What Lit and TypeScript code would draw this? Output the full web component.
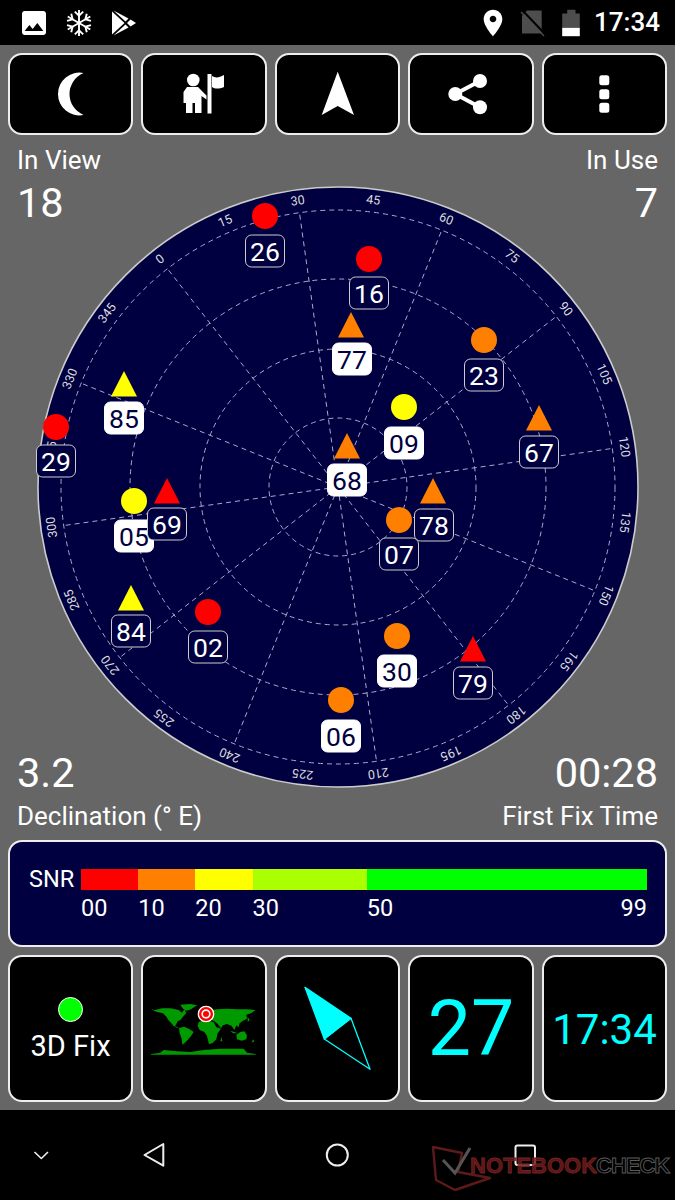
import { LitElement, html, css, svg } from "lit";
import { customElement } from "lit/decorators.js";

type Sat = { id: string; shape: "c" | "t"; color: string; x: number; y: number; lx: number; ly: number; used: boolean };

const R = "#ff0000", O = "#ff8000", Y = "#ffff00";
const SATS: Sat[] = [
  { id: "26", shape: "c", color: R, x: 265, y: 216, lx: 265, ly: 251, used: false },
  { id: "16", shape: "c", color: R, x: 369, y: 259, lx: 369, ly: 293, used: false },
  { id: "77", shape: "t", color: O, x: 351, y: 325, lx: 352, ly: 359, used: true },
  { id: "23", shape: "c", color: O, x: 484, y: 340, lx: 484, ly: 375, used: false },
  { id: "09", shape: "c", color: Y, x: 404, y: 407, lx: 404, ly: 443, used: true },
  { id: "67", shape: "t", color: O, x: 539, y: 418, lx: 539, ly: 452, used: false },
  { id: "85", shape: "t", color: Y, x: 124, y: 384, lx: 124, ly: 418, used: true },
  { id: "29", shape: "c", color: R, x: 56, y: 427, lx: 56, ly: 461, used: false },
  { id: "68", shape: "t", color: O, x: 347, y: 446, lx: 347, ly: 480, used: true },
  { id: "07", shape: "c", color: O, x: 399, y: 520, lx: 399, ly: 554, used: false },
  { id: "78", shape: "t", color: O, x: 433, y: 491, lx: 434, ly: 525, used: false },
  { id: "05", shape: "c", color: Y, x: 134, y: 501, lx: 134, ly: 536, used: true },
  { id: "69", shape: "t", color: R, x: 167, y: 491, lx: 167, ly: 524, used: false },
  { id: "84", shape: "t", color: Y, x: 131, y: 598, lx: 131, ly: 631, used: false },
  { id: "02", shape: "c", color: R, x: 208, y: 612, lx: 208, ly: 647, used: false },
  { id: "30", shape: "c", color: O, x: 397, y: 636, lx: 397, ly: 671, used: true },
  { id: "79", shape: "t", color: R, x: 473, y: 649, lx: 473, ly: 683, used: false },
  { id: "06", shape: "c", color: O, x: 341, y: 700, lx: 341, ly: 736, used: true },
];

const CX = 338, CY = 487, ROT = -38;
const pt = (deg: number, r: number) => {
  const a = ((deg + ROT) * Math.PI) / 180;
  return [CX + r * Math.sin(a), CY - r * Math.cos(a)];
};

const BANDS = [
  { w: 10, c: "#ff0000" },
  { w: 10, c: "#ff8000" },
  { w: 10, c: "#ffff00" },
  { w: 20, c: "#aaff00" },
  { w: 49, c: "#00ff00" },
];
const TICKS = [
  { w: 10, t: ["00"] },
  { w: 10, t: ["10"] },
  { w: 10, t: ["20"] },
  { w: 20, t: ["30"] },
  { w: 49, t: ["50", "99"] },
];

const LAND = [
  "25,30 45,25 70,25 85,28 95,30 105,38 112,28 118,38 108,50 100,60 92,64 88,72 84,78 92,82 98,86 92,84 80,78 72,68 64,60 58,50 48,40 30,36 12,28",
  "100,14 130,12 150,16 132,28 118,32 108,26",
  "96,84 112,80 128,88 140,96 132,108 122,120 112,130 106,134 104,116 98,100",
  "155,66 172,60 190,64 200,66 208,82 222,86 212,100 208,118 196,130 186,132 180,108 172,96 158,90 152,78",
  "160,58 170,40 190,30 210,28 240,26 270,28 300,28 326,30 312,40 298,44 300,56 288,62 278,70 274,82 268,76 262,90 254,78 240,72 228,76 222,84 212,72 200,62 180,56",
  "268,104 280,96 292,94 300,106 298,118 284,122 270,118",
  "250,92 262,96 272,100 258,100",
  "302,50 308,60 302,66",
  "224,110 226,124 220,124",
  "318,118 322,124 314,128",
  "12,162 40,158 50,150 90,154 130,156 170,150 220,146 290,146 300,158 326,162 326,164 12,164",
];

@customElement("app-root")
export class AppRoot extends LitElement {
  static styles = css`
    :host {
      display: block;
      width: 675px;
      height: 1200px;
      font-family: Roboto, "Liberation Sans", sans-serif;
      color: #fff;
      overflow: hidden;
    }
    .page { display: flex; flex-direction: column; height: 1200px; }
    .status {
      height: 45px; background: #000; display: flex; align-items: center;
      justify-content: space-between; padding: 0 15px 0 18px; box-sizing: border-box;
    }
    .group { display: flex; align-items: center; gap: 13px; }
    .group.right { gap: 7px; }
    .icon32 { width: 32px; height: 32px; display: block; }
    .clock { font-size: 26px; font-weight: 500; line-height: 45px; }
    .main {
      flex: 1; background: #666; display: flex; flex-direction: column;
      padding: 8px 8px 8px; box-sizing: border-box;
    }
    .row { display: flex; gap: 8.4px; }
    .tile {
      flex: 1 1 0; min-width: 0; background: #000; border: 2px solid #eee; border-radius: 14px;
      box-sizing: border-box; display: flex; align-items: center; justify-content: center;
      flex-direction: column; overflow: hidden;
    }
    .tools .tile { height: 82px; }
    .tools svg { width: 60px; height: 60px; display: block; }
    .stage { display: grid; height: 697px; margin: 0 -8px; }
    .stage > * { grid-area: 1 / 1; }
    .plot { width: 604px; height: 604px; margin: 50px 0 0 36px; display: block; }
    .plot text { font-family: Roboto, "Liberation Sans", sans-serif; }
    .deg { font-size: 12.5px; fill: #ddd; text-anchor: middle; }
    .satnum { font-size: 26.5px; text-anchor: middle; }
    .stats { display: flex; justify-content: space-between; padding: 0 17px; }
    .stats.top { align-self: start; padding-top: 9px; }
    .stats.bottom { align-self: end; }
    .stat { display: flex; flex-direction: column; }
    .stat.r { align-items: flex-end; }
    .cap { font-size: 26px; line-height: 32px; }
    .num { font-size: 41.5px; line-height: 52px; }
    .top .num { margin-top: 1px; }
    .bottom .num { margin-bottom: 1px; }
    .snr {
      height: 107px; margin-top: 8px; background: #000040; border: 2px solid #eee;
      border-radius: 14px; box-sizing: border-box; padding: 27px 18px 0 19px;
      display: grid; grid-template-columns: 52px 566px; grid-template-rows: 21px auto;
      font-size: 23.5px;
    }
    .snr-label { line-height: 21px; }
    .bar { display: flex; height: 21px; }
    .ticks { grid-column: 2; display: flex; margin-top: 6px; line-height: 24px; }
    .tick { display: flex; justify-content: space-between; }
    .tiles { margin-top: 8px; }
    .tiles .tile { height: 147px; }
    .dot {
      width: 25px; height: 25px; border-radius: 50%; background: #00ff00;
      border: 1.5px solid #fff; box-sizing: border-box; margin-top: 2px;
    }
    .fix { font-size: 29px; line-height: 34px; margin-top: 7px; }
    .map { width: 114px; height: 60px; display: block; margin-top: 3px; flex: none; }
    .compass { width: 125px; height: 147px; display: block; flex: none; }
    .big { color: #00ffff; font-size: 77px; line-height: 90px; }
    .mid { color: #00ffff; font-size: 42px; line-height: 50px; margin-top: 2px; }
    .nav { height: 90px; background: #000; }
    .nav svg { display: block; width: 675px; height: 90px; }
    .nav text { font-family: "Liberation Sans", sans-serif; font-weight: 700; font-size: 22px; }
    .wm-check { letter-spacing: -1px; }
  `;

  private polar() {
    const rings = [69, 138, 208, 277];
    const labels = [];
    for (let d = 0; d < 360; d += 15) {
      const [x, y] = pt(d, 285);
      labels.push(svg`<text class="deg" transform="translate(${x} ${y}) rotate(${d + ROT})">${d}</text>`);
    }
    const spokes = [];
    for (let d = 0; d < 360; d += 30) {
      const [x, y] = pt(d, 277);
      spokes.push(svg`<line x1=${CX} y1=${CY} x2=${x} y2=${y} stroke="#aaaacc" stroke-width="1" stroke-dasharray="5 4"/>`);
    }
    return html`<svg class="plot" viewBox="36 185 604 604">
      <circle cx=${CX} cy=${CY} r="300" fill="#000040" stroke="#ccc" stroke-width="1.6"/>
      ${rings.map((r) => svg`<circle cx=${CX} cy=${CY} r=${r} fill="none" stroke="#aaaacc" stroke-width="1" stroke-dasharray="5 4"/>`)}
      ${spokes}
      ${labels}
      ${SATS.map((s) => svg`
        ${s.shape === "c"
          ? svg`<circle cx=${s.x} cy=${s.y} r="13" fill=${s.color}/>`
          : svg`<polygon points="${s.x},${s.y - 13} ${s.x + 13},${s.y + 12.5} ${s.x - 13},${s.y + 12.5}" fill=${s.color}/>`}
        <rect x=${s.lx - 19.5} y=${s.ly - 16} width="39" height="32" rx="6"
          fill=${s.used ? "#fff" : "#000040"} stroke=${s.used ? "#fff" : "#ccc"} stroke-width="1"/>
        <text class="satnum" x=${s.lx} y=${s.ly + 9.5} fill=${s.used ? "#000040" : "#fff"}>${s.id}</text>
      `)}
    </svg>`;
  }

  private snowflake() {
    return html`<svg class="icon32" viewBox="0 0 32 32">
      <g fill="none" stroke="#fff" stroke-width="1.9">
        ${[0, 60, 120, 180, 240, 300].map((a) => svg`<g transform="rotate(${a} 16 16)">
          <path d="M16 16V3"/><path d="M11.8 4.6 16 8.6l4.2-4"/>
        </g>`)}
      </g>
    </svg>`;
  }

  render() {
    return html`<div class="page">
      <div class="status">
        <div class="group">
          <svg class="icon32" viewBox="0 0 24 24"><path fill="#fff" d="M21 19V5c0-1.1-.9-2-2-2H5c-1.1 0-2 .9-2 2v14c0 1.1.9 2 2 2h14c1.1 0 2-.9 2-2zM8.5 13.5l2.5 3.01L14.5 12l4.5 6H5l3.5-4.5z"/></svg>
          ${this.snowflake()}
          <svg class="icon32" viewBox="0 0 32 32" fill="#fff">
            <polygon points="4,4.5 16.5,16 4,27.5"/>
            <polygon points="5.5,3.5 20.5,11.5 17.5,14.5"/>
            <polygon points="22.5,12.5 28,16 22.5,19.5 19,16"/>
            <polygon points="5.5,28.5 20.5,20.5 17.5,17.5"/>
          </svg>
        </div>
        <div class="group right">
          <svg class="icon32" viewBox="0 0 24 24"><path fill="#fff" d="M12 2C8.13 2 5 5.13 5 9c0 5.25 7 13 7 13s7-7.75 7-13c0-3.87-3.13-7-7-7zm0 9.5c-1.38 0-2.5-1.12-2.5-2.5s1.12-2.5 2.5-2.5 2.5 1.12 2.5 2.5-1.12 2.5-2.5 2.5z"/></svg>
          <svg class="icon32" viewBox="0 0 32 32">
            <path fill="#4d4d4d" d="M11 3.5H25.7V26.5H6V8.5Z"/>
            <path d="M6 3 29 27" stroke="#000" stroke-width="2"/>
            <path d="M5 5 28 29" stroke="#4d4d4d" stroke-width="1.4"/>
          </svg>
          <svg class="icon32" viewBox="0 0 32 32">
            <path fill="#4d4d4d" d="M12.2 2.8H20.5V6.5H24.8V20.8H7.2V6.5H12.2Z"/>
            <rect x="7.2" y="20.8" width="17.6" height="8.4" fill="#fff"/>
          </svg>
          <div class="clock">17:34</div>
        </div>
      </div>
      <div class="main">
        <div class="row tools">
          <div class="tile"><svg viewBox="40 64 60 60"><path fill="#fff" d="M82.5 73A21.4 21.4 0 1 0 82.5 115A22.75 22.75 0 0 1 82.5 73Z"/></svg></div>
          <div class="tile"><svg viewBox="174 64 60 60" fill="#fff">
            <circle cx="193.3" cy="80" r="6.3"/>
            <path d="M187 87H198L206.5 95.5V99.5L201.5 96V113H195V103H192.5V113H186V103H183.5V92Z"/>
            <rect x="207.5" y="74" width="4" height="39.5"/>
            <path d="M212 76C215 78 219 78 224 75V87C219 89 215 89 212 87Z"/>
          </svg></div>
          <div class="tile"><svg viewBox="308 64 60 60"><path fill="#fff" d="M337.7 71.7 354 115 337.7 106 321.7 115Z"/></svg></div>
          <div class="tile"><svg viewBox="441 64 60 60">
            <path d="M480 81 455.3 94 480 107.3" fill="none" stroke="#fff" stroke-width="4"/>
            <g fill="#fff"><circle cx="480" cy="81" r="7"/><circle cx="455.3" cy="94" r="7"/><circle cx="480" cy="107.3" r="7"/></g>
          </svg></div>
          <div class="tile"><svg viewBox="574 64 60 60" fill="#fff">
            <rect x="599.3" y="75.3" width="10" height="10" rx="2.5"/>
            <rect x="599.3" y="89.3" width="10" height="10" rx="2.5"/>
            <rect x="599.3" y="102.7" width="10" height="10" rx="2.5"/>
          </svg></div>
        </div>
        <div class="stage">
          ${this.polar()}
          <div class="stats top">
            <div class="stat"><div class="cap">In View</div><div class="num">18</div></div>
            <div class="stat r"><div class="cap">In Use</div><div class="num">7</div></div>
          </div>
          <div class="stats bottom">
            <div class="stat"><div class="num">3.2</div><div class="cap">Declination (° E)</div></div>
            <div class="stat r"><div class="num">00:28</div><div class="cap">First Fix Time</div></div>
          </div>
        </div>
        <div class="snr">
          <div class="snr-label">SNR</div>
          <div class="bar">${BANDS.map((b) => html`<div style="flex:${b.w} 0 0;background:${b.c}"></div>`)}</div>
          <div class="ticks">${TICKS.map((t) => html`<div class="tick" style="flex:${t.w} 0 0">${t.t.map((v) => html`<span>${v}</span>`)}</div>`)}</div>
        </div>
        <div class="row tiles">
          <div class="tile"><div class="dot"></div><div class="fix">3D Fix</div></div>
          <div class="tile">
            <svg class="map" viewBox="0 0 342 180">
              <g fill="#009900">${LAND.map((p) => svg`<polygon points=${p}/>`)}</g>
              <circle cx="177" cy="42" r="25" fill="#fff"/>
              <circle cx="177" cy="42" r="21" fill="#ff0000"/>
              <circle cx="177" cy="42" r="14" fill="#fff"/>
              <circle cx="177" cy="42" r="9" fill="#ff0000"/>
            </svg>
          </div>
          <div class="tile">
            <svg class="compass" viewBox="275 955 125 147">
              <polygon points="305,987.3 351,1018.3 324.3,1039" fill="#00ffff" stroke="#00ffff" stroke-width="1.3" stroke-linejoin="round"/>
              <polygon points="351,1018.3 370,1069.3 324.3,1039" fill="none" stroke="#00ffff" stroke-width="1.3" stroke-linejoin="round"/>
            </svg>
          </div>
          <div class="tile"><div class="big">27</div></div>
          <div class="tile"><div class="mid">17:34</div></div>
        </div>
      </div>
      <div class="nav">
        <svg viewBox="0 1110 675 90">
          <g fill="none" stroke="#eee" stroke-width="2" stroke-linejoin="round">
            <path d="M34.5 1152 41.3 1158.5 48 1152" stroke-width="1.6"/>
            <path d="M144.5 1155 163.3 1144V1165.7Z"/>
            <circle cx="337.3" cy="1155" r="10.5"/>
            <rect x="515.5" y="1145.5" width="19.5" height="19.5" rx="2"/>
          </g>
          <g fill="none" stroke="#5e1a1a" stroke-width="2.4" stroke-linejoin="round">
            <path d="M433 1147 462 1153 458 1172 490 1178 455 1190 436 1180Z"/>
          </g>
          <path d="M443 1160 455 1173 470 1148" fill="none" stroke="#555" stroke-width="3"/>
          <text x="470" y="1173" fill="#6a1c1c" fill-opacity="0.85" stroke="#7a2020" stroke-width="0.8">NOTEBOOK</text>
          <text class="wm-check" x="596" y="1173" fill="#000" fill-opacity="0" stroke="#5a5a5a" stroke-width="0.9">CHECK</text>
        </svg>
      </div>
    </div>`;
  }
}
